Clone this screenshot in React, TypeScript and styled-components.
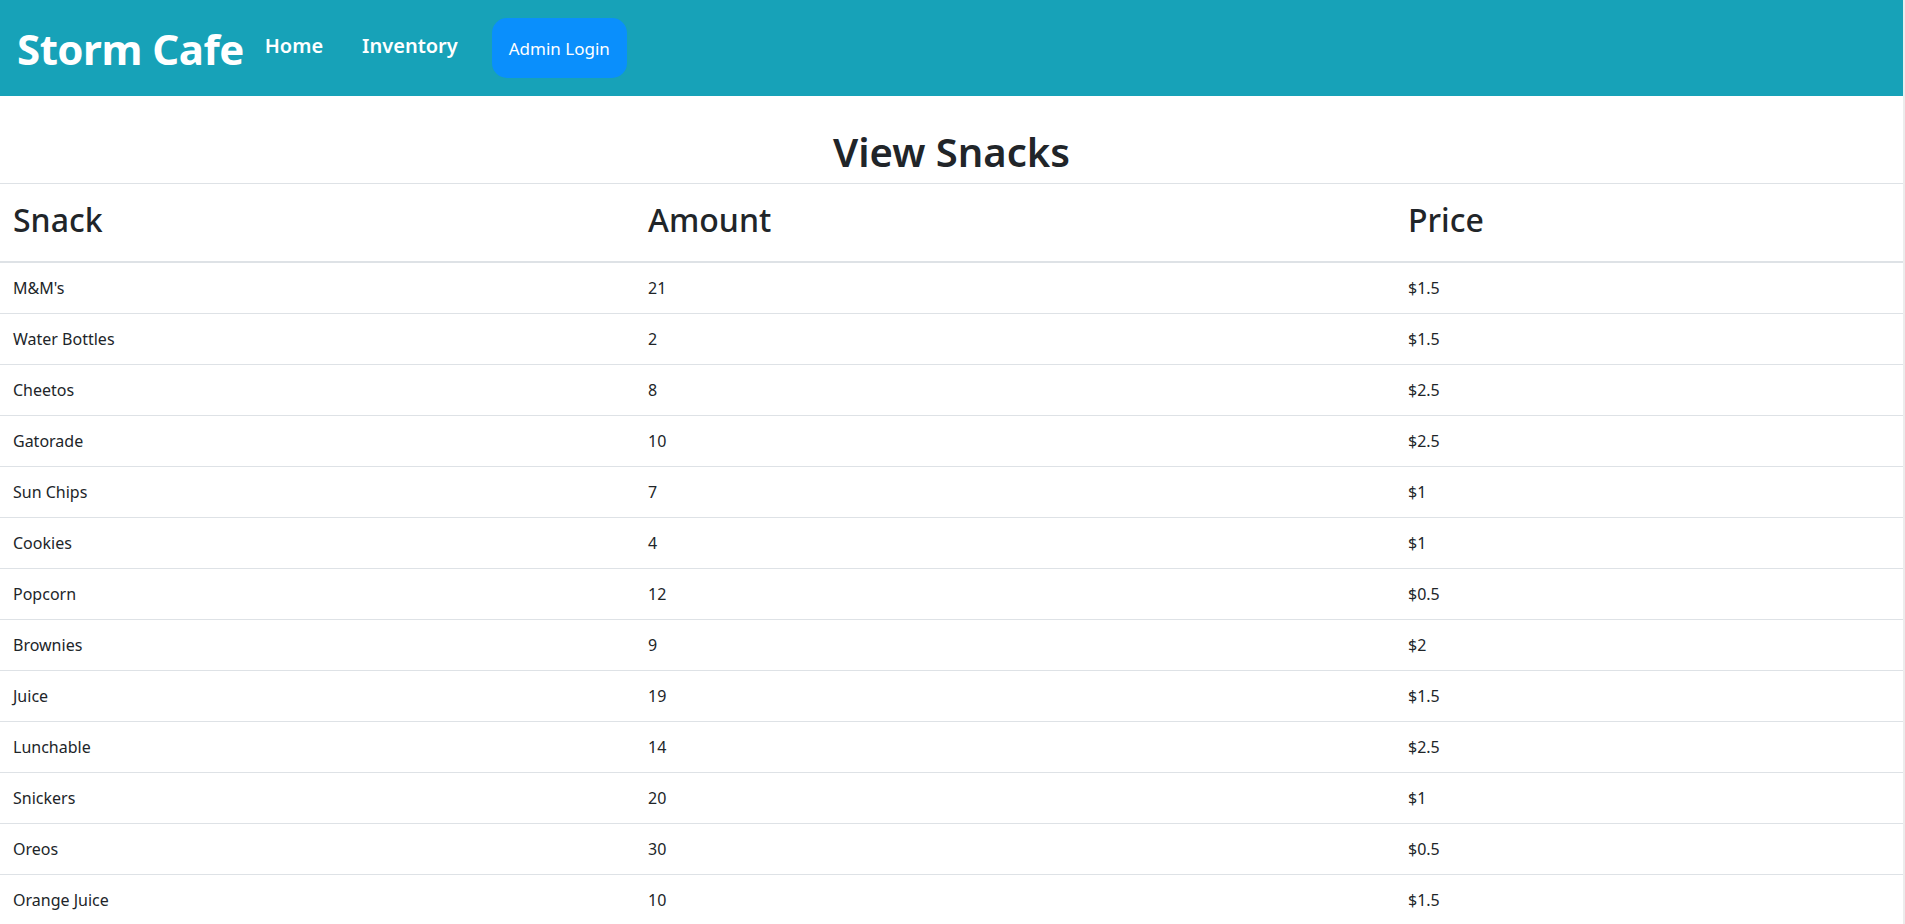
import styled, { createGlobalStyle } from 'styled-components';

const GlobalStyle = createGlobalStyle`
  html, body {
    margin: 0;
    padding: 0;
    background: #fff;
  }
  body {
    font-family: "Segoe UI", "Noto Sans", "Open Sans", sans-serif;
    color: #212529;
  }
`;

const Page = styled.div`
  width: 1903px;
  border-right: 2px solid #ececec;
  min-height: 924px;
`;

const Header = styled.header`
  background-color: #17a2b8;
  height: 96px;
  display: flex;
  align-items: center;
  padding: 0 17px;
  box-sizing: border-box;
`;

const Brand = styled.span`
  font-size: 42px;
  font-weight: 700;
  color: #fff;
  margin-right: 21px;
  letter-spacing: -0.5px;
`;

const NavLink = styled.a<{ $gap: number }>`
  font-size: 20px;
  font-weight: 600;
  color: #fff;
  text-decoration: none;
  margin-right: ${({ $gap }) => $gap}px;
  margin-top: -6px;
`;

const LoginButton = styled.button`
  background: #0a8ffc;
  color: #fff;
  border: none;
  border-radius: 15px;
  width: 135px;
  height: 60px;
  font-family: inherit;
  font-size: 17px;
`;

const Title = styled.h1`
  margin: 0;
  padding: 32px 0 7px;
  text-align: center;
  font-size: 40px;
  font-weight: 600;
  line-height: 1.2;
  border-bottom: 1px solid #dee2e6;
`;

const Table = styled.table`
  width: 100%;
  border-collapse: collapse;
  table-layout: fixed;
`;

const HeadCell = styled.th<{ $width: number }>`
  width: ${({ $width }) => $width}px;
  text-align: left;
  font-size: 32px;
  font-weight: 500;
  padding: 10px 13px 16px;
  height: 78px;
  box-sizing: border-box;
  border-bottom: 2px solid #dee2e6;
`;

const Cell = styled.td`
  font-size: 16px;
  padding: 12px 13px;
  height: 51px;
  box-sizing: border-box;
  border-top: 1px solid #dee2e6;
`;

const snacks: [string, number, string][] = [
  ["M&M's", 21, '$1.5'],
  ['Water Bottles', 2, '$1.5'],
  ['Cheetos', 8, '$2.5'],
  ['Gatorade', 10, '$2.5'],
  ['Sun Chips', 7, '$1'],
  ['Cookies', 4, '$1'],
  ['Popcorn', 12, '$0.5'],
  ['Brownies', 9, '$2'],
  ['Juice', 19, '$1.5'],
  ['Lunchable', 14, '$2.5'],
  ['Snickers', 20, '$1'],
  ['Oreos', 30, '$0.5'],
  ['Orange Juice', 10, '$1.5'],
];

export default function App() {
  return (
    <Page>
      <GlobalStyle />
      <Header>
        <Brand>Storm Cafe</Brand>
        <NavLink href="#" $gap={39}>Home</NavLink>
        <NavLink href="#" $gap={34}>Inventory</NavLink>
        <LoginButton>Admin Login</LoginButton>
      </Header>
      <Title>View Snacks</Title>
      <Table>
        <thead>
          <tr>
            <HeadCell $width={635}>Snack</HeadCell>
            <HeadCell $width={760}>Amount</HeadCell>
            <HeadCell $width={508}>Price</HeadCell>
          </tr>
        </thead>
        <tbody>
          {snacks.map(([name, amount, price]) => (
            <tr key={name}>
              <Cell>{name}</Cell>
              <Cell>{amount}</Cell>
              <Cell>{price}</Cell>
            </tr>
          ))}
        </tbody>
      </Table>
    </Page>
  );
}
